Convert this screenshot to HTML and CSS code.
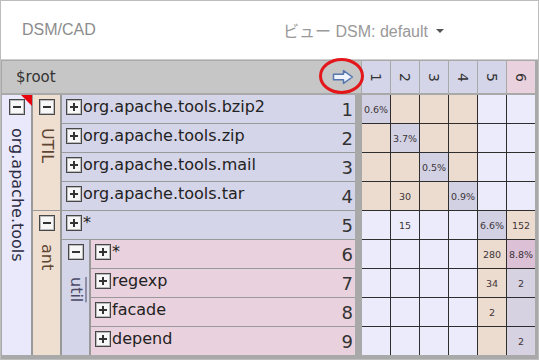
FILE: index.html
```html
<!DOCTYPE html>
<html lang="ja">
<head>
    <meta charset="UTF-8">
    <title>DSM/CAD</title>
    <link rel="stylesheet" href="styles.css">
</head>
<body>
    <div class="frame">
        <header class="topbar">
            <span class="brand">DSM/CAD</span>
            <span class="view">ビュー DSM: default<span class="caret"></span></span>
        </header>

        <div class="dsm">
            <div class="head-row">
                <div class="root-bar">
                    <span>$root</span>
                    <button class="go-btn" title="移動">
                        <svg width="22" height="16" viewBox="0 0 22 16">
                            <path d="M1.5 5.2h10V1.6L20.4 8l-8.9 6.4v-3.6h-10z" fill="#eef3fc" stroke="#5676ad" stroke-width="1.5" stroke-linejoin="round"/>
                        </svg>
                    </button>
                </div>
                <div class="col-head">1</div>
                <div class="col-head">2</div>
                <div class="col-head">3</div>
                <div class="col-head">4</div>
                <div class="col-head">5</div>
                <div class="col-head pink">6</div>
            </div>

            <div class="body-row">
                <!-- Tree -->
                <div class="tree">
                    <div class="grp lvl1 span9 flagged">
                        <span class="tg"></span>
                        <span class="label">org.apache.tools</span>
                    </div>
                    <div class="grp lvl2 span4">
                        <span class="tg"></span>
                        <span class="label">UTIL</span>
                    </div>
                    <div class="item wide"><span class="tg plus"></span><span class="name">org.apache.tools.bzip2</span><span class="num">1</span></div>
                    <div class="item wide"><span class="tg plus"></span><span class="name">org.apache.tools.zip</span><span class="num">2</span></div>
                    <div class="item wide"><span class="tg plus"></span><span class="name">org.apache.tools.mail</span><span class="num">3</span></div>
                    <div class="item wide"><span class="tg plus"></span><span class="name">org.apache.tools.tar</span><span class="num">4</span></div>
                    <div class="grp lvl2 span5">
                        <span class="tg"></span>
                        <span class="label">ant</span>
                    </div>
                    <div class="item wide"><span class="tg plus"></span><span class="name">*</span><span class="num">5</span></div>
                    <div class="grp lvl3 span4">
                        <span class="tg"></span>
                        <span class="label link">util</span>
                    </div>
                    <div class="item pink"><span class="tg plus"></span><span class="name">*</span><span class="num">6</span></div>
                    <div class="item pink"><span class="tg plus"></span><span class="name">regexp</span><span class="num">7</span></div>
                    <div class="item pink"><span class="tg plus"></span><span class="name">facade</span><span class="num">8</span></div>
                    <div class="item pink"><span class="tg plus"></span><span class="name">depend</span><span class="num">9</span></div>
                </div>

                <!-- Matrix -->
                <div class="matrix">
                    <div class="cell dg">0.6%</div><div class="cell pe"></div><div class="cell pe"></div><div class="cell pe"></div><div class="cell"></div><div class="cell"></div>
                    <div class="cell pe"></div><div class="cell dg">3.7%</div><div class="cell pe"></div><div class="cell pe"></div><div class="cell"></div><div class="cell"></div>
                    <div class="cell pe"></div><div class="cell pe"></div><div class="cell dg">0.5%</div><div class="cell pe"></div><div class="cell"></div><div class="cell"></div>
                    <div class="cell pe"></div><div class="cell pe">30</div><div class="cell pe"></div><div class="cell dg">0.9%</div><div class="cell"></div><div class="cell"></div>
                    <div class="cell"></div><div class="cell">15</div><div class="cell"></div><div class="cell"></div><div class="cell dg">6.6%</div><div class="cell pe">152</div>
                    <div class="cell"></div><div class="cell"></div><div class="cell"></div><div class="cell"></div><div class="cell pe">280</div><div class="cell pk">8.8%</div>
                    <div class="cell"></div><div class="cell"></div><div class="cell"></div><div class="cell"></div><div class="cell pe">34</div><div class="cell gl">2</div>
                    <div class="cell"></div><div class="cell"></div><div class="cell"></div><div class="cell"></div><div class="cell pe">2</div><div class="cell gl"></div>
                    <div class="cell"></div><div class="cell"></div><div class="cell"></div><div class="cell"></div><div class="cell pe"></div><div class="cell gl">2</div>
                </div>
            </div>
        </div>

        <span class="mark"></span>
    </div>
</body>
</html>
```

FILE: styles.css
```css
/* General */
body {
    margin: 0;
    background: #fff;
}
.frame {
    position: relative;
    width: 539px;
    height: 360px;
    box-sizing: border-box;
    border: 1px solid #bdbdbd;
    overflow: hidden;
    background: #fff;
    font-family: "DejaVu Sans", sans-serif;
    color: #2a2a2a;
}

/* Top bar */
.topbar {
    display: grid;
    grid-template-columns: 261px auto;
    align-items: center;
    height: 58px;
    padding-left: 21px;
    border-bottom: 1px solid #cfcfcf;
    font-family: "Liberation Sans", "Noto Sans CJK JP", sans-serif;
    font-size: 16px;
    color: #8c8c8c;
}
.view {
    display: flex;
    align-items: center;
    color: #999;
}
.caret {
    width: 0;
    height: 0;
    margin-left: 8px;
    margin-top: 2px;
    border-top: 4px solid #555;
    border-left: 4px solid transparent;
    border-right: 4px solid transparent;
}

/* DSM area */
.dsm {
    height: 300px;
    box-sizing: border-box;
    padding: 1px 2px 0 1px;
    background: #a9a9a9;
}
.head-row {
    display: flex;
    gap: 1px;
    height: 32px;
    margin-bottom: 2px;
}
.root-bar {
    display: flex;
    align-items: center;
    width: 359px;
    padding-left: 14px;
    box-sizing: border-box;
    background: #c6c6c6;
    font-size: 15px;
    color: #333;
}
.go-btn {
    display: flex;
    margin-left: auto;
    margin-right: 7px;
    padding: 0;
    border: none;
    background: none;
}
.col-head {
    display: flex;
    justify-content: center;
    align-items: center;
    width: 28px;
    background: #d5d5e9;
    writing-mode: vertical-rl;
    font-size: 14px;
    color: #333;
}
.col-head.pink {
    background: #e9d1dd;
}
.body-row {
    display: flex;
    align-items: flex-start;
}

/* Tree */
.tree {
    display: grid;
    grid-template-columns: 29px 27px 27px 1fr;
    grid-template-rows: repeat(9, 28px);
    column-gap: 2px;
    row-gap: 1px;
    width: 353px;
    margin-right: 7px;
    background: #999;
}
.grp {
    display: flex;
    flex-direction: column;
    align-items: center;
    padding-top: 4px;
}
.grp .label {
    margin-top: 13px;
    writing-mode: vertical-rl;
    font-size: 16px;
    line-height: 18px;
}
.lvl1 {
    grid-column: 1;
    background: #e9e9fb;
    color: #2c2c44;
}
.lvl2 {
    grid-column: 2;
    background: #efdfd0;
    color: #5e4632;
}
.lvl3 {
    grid-column: 3;
    background: #d5d5e9;
    color: #4a4a68;
}
.lvl3 .label {
    margin-top: 17px;
}
.span9 { grid-row: span 9; }
.span5 { grid-row: span 5; }
.span4 { grid-row: span 4; }
.link {
    text-decoration: underline;
}
.flagged {
    position: relative;
}
.flagged::after {
    content: "";
    position: absolute;
    top: 0;
    right: -1px;
    border-top: 11px solid #e8000b;
    border-left: 11px solid transparent;
}
.item {
    display: flex;
    align-items: flex-start;
    gap: 1px;
    grid-column: 4;
    padding: 4px 2px 0 4px;
    background: #e9d1dd;
}
.item.wide {
    grid-column: 3 / 5;
    background: #d5d5e9;
}
.name {
    font-size: 16px;
    line-height: 16px;
    color: #222;
}
.num {
    align-self: center;
    margin: -4px 0 0 auto;
    font-size: 18px;
    color: #333;
}

/* Expand / collapse boxes */
.tg {
    position: relative;
    flex: none;
    width: 16px;
    height: 16px;
    box-sizing: border-box;
    border: 1px solid #474747;
    box-shadow: inset 0 0 0 1px #bcbcbc;
    background: #f7f7f7;
}
.tg::before {
    content: "";
    position: absolute;
    left: 3px;
    right: 3px;
    top: 6px;
    height: 2px;
    background: #333;
}
.tg.plus::after {
    content: "";
    position: absolute;
    top: 3px;
    bottom: 3px;
    left: 6px;
    width: 2px;
    background: #333;
}

/* Matrix */
.matrix {
    display: grid;
    grid-template-columns: repeat(6, 28px);
    grid-auto-rows: 28px;
    gap: 1px;
    background: #2e2e2e;
}
.cell {
    display: flex;
    justify-content: center;
    align-items: center;
    background: #ebebfb;
    font-size: 9.5px;
    color: #3e3438;
}
.cell.pe { background: #ecdccf; }
.cell.dg { background: #d1d1e3; }
.cell.pk { background: #dbc0d6; }
.cell.gl { background: #d6d2e2; }

/* Red annotation ring */
.mark {
    position: absolute;
    left: 318px;
    top: 57px;
    width: 45px;
    height: 36px;
    box-sizing: border-box;
    border: 3px solid #e3161b;
    border-radius: 50%;
}
```
